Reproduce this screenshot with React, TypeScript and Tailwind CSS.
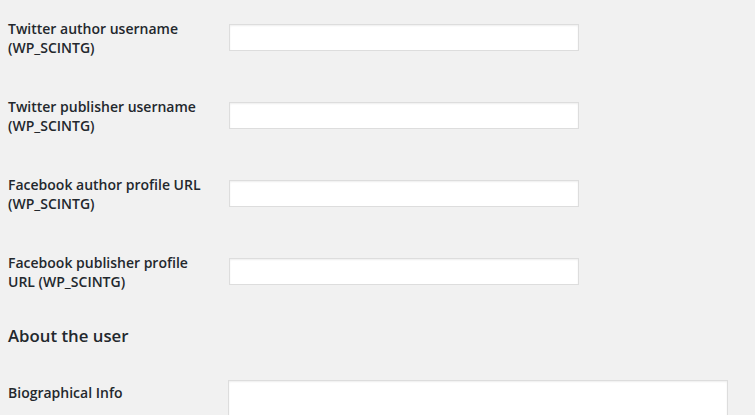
import React from 'react';

const fields = [
  ['Twitter author username', '(WP_SCINTG)'],
  ['Twitter publisher username', '(WP_SCINTG)'],
  ['Facebook author profile URL', '(WP_SCINTG)'],
  ['Facebook publisher profile', 'URL (WP_SCINTG)'],
];

function Row({ lines }: { lines: string[] }) {
  return (
    <div className="flex h-[78px]">
      <div className="w-[220px] shrink-0 pt-[19px] leading-[19px] font-semibold">
        {lines.map(l => (
          <div key={l}>{l}</div>
        ))}
      </div>
      <div className="pt-[24px]">
        <input
          type="text"
          className="ml-[1px] block h-[27px] w-[350px] border border-[#dddddd] bg-white shadow-[inset_0_1px_2px_rgba(0,0,0,0.07)] outline-none"
        />
      </div>
    </div>
  );
}

export default function App() {
  return (
    <div
      className="min-h-screen overflow-hidden bg-[#f1f1f1] pl-[8px] text-[14px] text-[#23282d]"
      style={{ fontFamily: '"Open Sans", "Liberation Sans", sans-serif' }}
    >
      {fields.map(f => (
        <Row key={f[0]} lines={f} />
      ))}
      <h2 className="mt-[12px] text-[16.8px] leading-[24px] font-semibold">About the user</h2>
      <div className="mt-[32px] flex">
        <div className="w-[220px] shrink-0 pt-[3px] leading-[19px] font-semibold">Biographical Info</div>
        <textarea className="block h-[120px] w-[500px] resize-none border border-[#dddddd] bg-white shadow-[inset_0_1px_2px_rgba(0,0,0,0.07)] outline-none" />
      </div>
    </div>
  );
}
